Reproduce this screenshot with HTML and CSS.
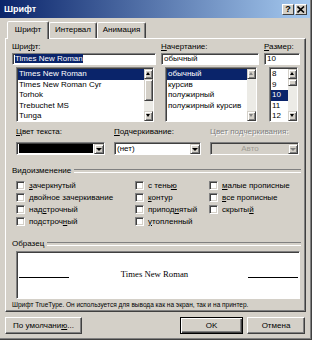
FILE: index.html
```html
<!DOCTYPE html>
<html lang="ru">
<head>
  <meta charset="UTF-8">
  <title>Шрифт</title>
  <link rel="stylesheet" href="styles.css">
</head>
<body>
  <div class="window">
    <div class="titlebar">
      <span class="title">Шрифт</span>
      <div class="title-buttons">
        <span class="tbtn help">?</span>
        <span class="tbtn">
          <svg width="8" height="7" viewBox="0 0 8 7"><path d="M0.5 0.5 L7 6.5 M7 0.5 L0.5 6.5" stroke="#000" stroke-width="1.6"/></svg>
        </span>
      </div>
    </div>

    <div class="tabs">
      <div class="tab active">Шрифт</div>
      <div class="tab">Интервал</div>
      <div class="tab">Анимация</div>
    </div>

    <div class="panel">
      <!-- шрифт / начертание / размер -->
      <div class="font-row">
        <div class="col">
          <label class="lbl">Шри<u>ф</u>т:</label>
          <div class="edit"><span class="sel">Times New Roman</span></div>
          <div class="list list-font">
            <ul>
              <li class="selected">Times New Roman</li>
              <li>Times New Roman Cyr</li>
              <li>Torhok</li>
              <li>Trebuchet MS</li>
              <li>Tunga</li>
            </ul>
            <div class="vscroll">
              <span class="arrow up"></span>
              <span class="thumb"></span>
              <span class="track"></span>
              <span class="arrow down"></span>
            </div>
          </div>
        </div>
        <div class="col">
          <label class="lbl"><u>Н</u>ачертание:</label>
          <div class="edit">обычный</div>
          <div class="list list-style">
            <ul>
              <li class="selected">обычный</li>
              <li>курсив</li>
              <li>полужирный</li>
              <li>полужирный курсив</li>
            </ul>
            <div class="vscroll disabled">
              <span class="arrow up"></span>
              <span class="track"></span>
              <span class="arrow down"></span>
            </div>
          </div>
        </div>
        <div class="col">
          <label class="lbl"><u>Р</u>азмер:</label>
          <div class="edit">10</div>
          <div class="list list-size">
            <ul>
              <li>8</li>
              <li>9</li>
              <li class="selected">10</li>
              <li>11</li>
              <li>12</li>
            </ul>
            <div class="vscroll">
              <span class="arrow up"></span>
              <span class="thumb small"></span>
              <span class="track"></span>
              <span class="arrow down"></span>
            </div>
          </div>
        </div>
      </div>

      <!-- цвета -->
      <div class="color-row">
        <div class="col">
          <label class="lbl"><u>Ц</u>вет текста:</label>
          <div class="combo">
            <div class="combo-field"><span class="swatch"></span></div>
            <span class="drop"></span>
          </div>
        </div>
        <div class="col">
          <label class="lbl"><u>П</u>одчеркивание:</label>
          <div class="combo">
            <div class="combo-field">(нет)</div>
            <span class="drop"></span>
          </div>
        </div>
        <div class="col">
          <label class="lbl muted">Цвет подчеркивания:</label>
          <div class="combo disabled">
            <div class="combo-field center">Авто</div>
            <span class="drop"></span>
          </div>
        </div>
      </div>

      <div class="group-title">Видоизменение</div>
      <div class="effects">
        <label class="check"><span class="box"></span><span><u>з</u>ачеркнутый</span></label>
        <label class="check"><span class="box"></span><span>двойное зачеркивание</span></label>
        <label class="check"><span class="box"></span><span>над<u>с</u>трочный</span></label>
        <label class="check"><span class="box"></span><span>подстроч<u>н</u>ый</span></label>
        <label class="check"><span class="box"></span><span>с тень<u>ю</u></span></label>
        <label class="check"><span class="box"></span><span><u>к</u>онтур</span></label>
        <label class="check"><span class="box"></span><span>припод<u>н</u>ятый</span></label>
        <label class="check"><span class="box"></span><span><u>у</u>топленный</span></label>
        <label class="check"><span class="box"></span><span><u>м</u>алые прописные</span></label>
        <label class="check"><span class="box"></span><span><u>в</u>се прописные</span></label>
        <label class="check"><span class="box"></span><span>скрыты<u>й</u></span></label>
      </div>

      <div class="group-title sample-title">Образец</div>
      <div class="sample">
        <span class="rule"></span>
        <span class="sample-text">Times New Roman</span>
        <span class="rule"></span>
      </div>
      <p class="note">Шрифт TrueType. Он используется для вывода как на экран, так и на принтер.</p>
    </div>

    <div class="buttons">
      <button class="btn btn-default-set">По умолчани<u>ю</u>...</button>
      <button class="btn btn-ok">OK</button>
      <button class="btn btn-cancel">Отмена</button>
    </div>
  </div>
</body>
</html>
```

FILE: styles.css
```css
:root {
  --face: #d4d0c8;
  --shadow: #808080;
  --dark: #404040;
  --hilite: #ffffff;
  --select: #0a246a;
  --font: "Liberation Sans", Arial, sans-serif;
}
* {
  box-sizing: border-box;
  margin: 0;
  padding: 0;
}
body {
  font-family: var(--font);
  font-size: 8px;
  color: #000;
  background: var(--face);
}
u {
  text-decoration: underline;
}
.window {
  width: 312px;
  height: 340px;
  background: var(--face);
  padding: 0 2px 2px 0;
  box-shadow: inset -1px -1px 0 var(--dark), inset -2px -2px 0 var(--shadow);
  display: flex;
  flex-direction: column;
}

/* заголовок */
.titlebar {
  height: 18px;
  background: linear-gradient(to right, #0a246a, #a6caf0);
  display: flex;
  align-items: center;
  justify-content: space-between;
  padding: 0 3px 0 4px;
}
.title {
  color: #fff;
  font-weight: bold;
  font-size: 9px;
}
.title-buttons {
  display: flex;
  gap: 1px;
}
.tbtn {
  width: 12px;
  height: 11px;
  background: var(--face);
  border: 1px solid;
  border-color: var(--hilite) var(--dark) var(--dark) var(--hilite);
  display: flex;
  align-items: center;
  justify-content: center;
  font-weight: bold;
  font-size: 9px;
  line-height: 9px;
}

/* вкладки */
.tabs {
  display: flex;
  align-items: flex-end;
  height: 20px;
  padding-left: 7px;
}
.tab {
  height: 16px;
  line-height: 14px;
  text-align: center;
  border: 1px solid;
  border-bottom: none;
  border-color: var(--hilite) var(--dark) transparent var(--hilite);
  box-shadow: inset -1px 0 0 var(--shadow);
  border-radius: 2px 2px 0 0;
  font-size: 8px;
}
.tab:nth-child(1) { width: 42px; }
.tab:nth-child(2) { width: 48px; }
.tab:nth-child(3) { width: 49px; }
.tab.active {
  height: 18px;
  line-height: 15px;
  margin-bottom: -1px;
  background: var(--face);
  position: relative;
  z-index: 1;
}

/* панель */
.panel {
  margin: 0 4px 0 5px;
  height: 274px;
  border: 1px solid;
  border-color: var(--hilite) var(--dark) var(--dark) var(--hilite);
  box-shadow: inset -1px -1px 0 var(--shadow);
  padding: 3px 5px 0 6px;
}
.lbl {
  display: block;
  height: 10px;
  line-height: 10px;
  font-size: 8px;
  white-space: nowrap;
}
.lbl.muted {
  color: var(--shadow);
  text-shadow: 1px 1px 0 #fff;
}
.font-row {
  display: grid;
  grid-template-columns: 144px 98px 36px;
  column-gap: 5px;
}
.edit {
  height: 12px;
  margin-top: 1px;
  background: #fff;
  border: 1px solid;
  border-color: var(--shadow) var(--hilite) var(--hilite) var(--shadow);
  box-shadow: inset 1px 1px 0 var(--dark);
  padding-left: 2px;
  line-height: 10px;
  font-size: 8px;
  white-space: nowrap;
  overflow: hidden;
}
.sel {
  background: var(--select);
  color: #fff;
}
.list {
  display: flex;
  height: 55px;
  margin: 2px 2px 0 4px;
  background: #fff;
  border: 1px solid;
  border-color: var(--shadow) var(--hilite) var(--hilite) var(--shadow);
  box-shadow: inset 1px 1px 0 var(--dark);
  padding: 1px 0 0 1px;
}
.list-size {
  margin: 2px 2px 0 5px;
}
.list ul {
  flex: 1;
  list-style: none;
  overflow: hidden;
}
.list li {
  height: 10.6px;
  line-height: 10.6px;
  padding-left: 1px;
  white-space: nowrap;
  font-size: 8px;
}
.list li.selected {
  background: var(--select);
  color: #fff;
}
.vscroll {
  width: 9px;
  display: flex;
  flex-direction: column;
  background: #ecebe6;
}
.vscroll .track {
  flex: 1;
}
.arrow,
.thumb {
  display: block;
  background: var(--face);
  border: 1px solid;
  border-color: var(--face) var(--dark) var(--dark) var(--face);
  box-shadow: inset 1px 1px 0 #fff, inset -1px -1px 0 var(--shadow);
}
.arrow {
  height: 10px;
  position: relative;
}
.thumb {
  height: 22px;
}
.thumb.small {
  height: 7px;
}
.arrow::after {
  content: "";
  position: absolute;
  left: 1px;
  top: 2px;
  border-left: 2.5px solid transparent;
  border-right: 2.5px solid transparent;
}
.arrow.up::after {
  border-bottom: 3px solid #000;
}
.arrow.down::after {
  border-top: 3px solid #000;
}
.vscroll.disabled .arrow.up::after {
  border-bottom-color: var(--shadow);
}
.vscroll.disabled .arrow.down::after {
  border-top-color: var(--shadow);
}

/* цвет, подчеркивание */
.color-row {
  display: grid;
  grid-template-columns: 89px 87px 89px;
  column-gap: 9px;
  padding-left: 4px;
  margin-top: 5px;
}
.combo {
  display: flex;
  height: 13px;
  margin-top: 5px;
  background: #fff;
  border: 1px solid;
  border-color: var(--shadow) var(--hilite) var(--hilite) var(--shadow);
  box-shadow: inset 1px 1px 0 var(--dark);
  padding: 1px 0 0 1px;
}
.combo-field {
  flex: 1;
  padding: 0 1px;
  line-height: 10px;
  font-size: 8px;
}
.combo-field.center {
  text-align: center;
  color: #a09c94;
}
.swatch {
  display: block;
  height: 9px;
  margin-top: 0;
  background: #000;
}
.combo.disabled {
  background: var(--face);
}
.drop {
  width: 10px;
  background: var(--face);
  border: 1px solid;
  border-color: var(--face) var(--dark) var(--dark) var(--face);
  box-shadow: inset 1px 1px 0 #fff, inset -1px -1px 0 var(--shadow);
  display: flex;
  align-items: center;
  justify-content: center;
}
.drop::after {
  content: "";
  border-left: 3px solid transparent;
  border-right: 3px solid transparent;
  border-top: 3px solid #000;
}
.combo.disabled .drop::after {
  border-top-color: var(--shadow);
}

/* группы */
.group-title {
  display: flex;
  align-items: center;
  gap: 3px;
  height: 10px;
  line-height: 10px;
  margin-top: 11px;
  font-size: 8px;
}
.group-title::after {
  content: "";
  flex: 1;
  height: 2px;
  border-top: 1px solid var(--shadow);
  border-bottom: 1px solid #fff;
  margin-right: -1px;
}
.effects {
  display: grid;
  grid-template-columns: 119px 74px 1fr;
  grid-template-rows: repeat(4, 12px);
  grid-auto-flow: column;
  padding-left: 4px;
  margin-top: 3px;
}
.check {
  display: flex;
  align-items: center;
  gap: 4px;
  font-size: 8px;
  white-space: nowrap;
}
.box {
  width: 9px;
  height: 9px;
  background: #fff;
  border: 1px solid;
  border-color: var(--shadow) var(--hilite) var(--hilite) var(--shadow);
  box-shadow: inset 1px 1px 0 var(--dark), inset -1px -1px 0 var(--face);
  flex: none;
}
.sample-title {
  margin-top: 12px;
}
.sample {
  display: flex;
  align-items: flex-end;
  height: 48px;
  margin: 2px 0 0 4px;
  background: #fff;
  border: 1px solid;
  border-color: var(--shadow) var(--hilite) var(--hilite) var(--shadow);
  box-shadow: inset 1px 1px 0 var(--dark);
  padding: 0 1px 19px 2px;
}
.rule {
  width: 50px;
  height: 1px;
  background: #000;
  margin-bottom: 1px;
}
.sample-text {
  flex: 1;
  text-align: center;
  font-family: "Liberation Serif", "Times New Roman", serif;
  font-size: 8.7px;
  line-height: 10px;
  padding-right: 8px;
}
.note {
  margin-top: 2px;
  font-size: 6.5px;
  line-height: 8px;
  white-space: nowrap;
}

/* кнопки */
.buttons {
  display: flex;
  padding-left: 5px;
  margin-top: 5px;
}
.btn {
  height: 17px;
  font-family: var(--font);
  font-size: 8px;
  background: var(--face);
  border: 1px solid;
  border-color: var(--hilite) var(--dark) var(--dark) var(--hilite);
  box-shadow: inset -1px -1px 0 var(--shadow);
}
.btn-default-set {
  width: 77px;
}
.btn-ok {
  width: 63px;
  margin-left: 98px;
  border: 1px solid #000;
  box-shadow: inset 1px 1px 0 #fff, inset -1px -1px 0 var(--dark), inset -2px -2px 0 var(--shadow);
}
.btn-cancel {
  width: 58px;
  margin-left: 4px;
}
```
